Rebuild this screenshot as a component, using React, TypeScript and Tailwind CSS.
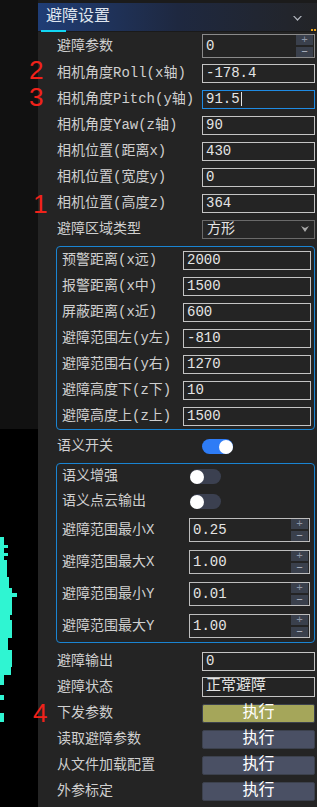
import React from 'react';

const cyanBands: [number, number, number][] = [
  // y, height, width
  [537, 8, 4],
  [545, 3, 8],
  [548, 5, 4],
  [553, 3, 8],
  [556, 4, 4],
  [560, 7, 7],
  [567, 10, 7],
  [577, 11, 9],
  [588, 5, 12],
  [593, 4, 17],
  [597, 18, 12],
  [615, 5, 10],
  [620, 18, 12],
  [638, 12, 8],
  [650, 17, 12],
  [667, 8, 11],
  [675, 10, 4],
  [695, 5, 4],
  [713, 9, 4],
];

function Field({ value, focused }: { value: string; focused?: boolean }) {
  return (
    <div
      className={`w-[113px] h-[19px] border flex items-center px-[3px] text-[14px] leading-[17px] text-[#e4e4e4] ${
        focused ? 'border-[#1f8be3]' : 'border-[#c4c4c4]'
      }`}
    >
      <span>{value}</span>
      {focused && <span className="w-px h-[14px] bg-[#e4e4e4] ml-px" />}
    </div>
  );
}

function Spin({ value, w, border }: { value: string; w: string; border: string }) {
  return (
    <div className={`${w} h-[24px] border ${border} flex items-center pl-[3px] pr-px text-[14px] text-[#e4e4e4]`}>
      <span className="flex-1">{value}</span>
      <div className="flex flex-col gap-[2px]">
        <div className="w-[17px] h-[10px] bg-[#3a404c] flex items-center justify-center text-[#8e96a6] text-[11px] leading-none">+</div>
        <div className="w-[17px] h-[10px] bg-[#3a404c] flex items-center justify-center text-[#b8bec8] text-[11px] leading-none">−</div>
      </div>
    </div>
  );
}

function Toggle({ on }: { on?: boolean }) {
  return (
    <div
      className={`w-[31px] h-[15px] rounded-full flex items-center ${
        on ? 'bg-[#2e7cf6] justify-end' : 'bg-[#3b4050] justify-start'
      }`}
    >
      <div className="w-[14px] h-[14px] rounded-full bg-white" />
    </div>
  );
}

function Row({ label, children, h = 'h-[26px]' }: { label: string; children: React.ReactNode; h?: string }) {
  return (
    <div className={`flex items-center ${h}`}>
      <div className="w-[164px] pl-[19px] whitespace-nowrap">{label}</div>
      {children}
    </div>
  );
}

function GroupRow({ label, children, h = 'h-[26px]', lw = 'w-[126px]' }: { label: string; children: React.ReactNode; h?: string; lw?: string }) {
  return (
    <div className={`flex items-center ${h}`}>
      <div className={`${lw} pl-[5px] whitespace-nowrap`}>{label}</div>
      {children}
    </div>
  );
}

function ExecButton({ active }: { active?: boolean }) {
  return (
    <div
      className={`w-[113px] h-[19px] rounded-[2px] border border-[#3c414d] flex items-center justify-center text-[16px] text-white ${
        active ? 'bg-[#a5a65a]' : 'bg-[#4a5064]'
      }`}
    >
      执行
    </div>
  );
}

export default function App() {
  const group1 = [
    ['预警距离(x远)', '2000'],
    ['报警距离(x中)', '1500'],
    ['屏蔽距离(x近)', '600'],
    ['避障范围左(y左)', '-810'],
    ['避障范围右(y右)', '1270'],
    ['避障高度下(z下)', '10'],
    ['避障高度上(z上)', '1500'],
  ];
  const spins = [
    ['避障范围最小X', '0.25'],
    ['避障范围最大X', '1.00'],
    ['避障范围最小Y', '0.01'],
    ['避障范围最大Y', '1.00'],
  ];

  return (
    <div className="relative w-[317px] h-[807px] flex overflow-hidden font-['Liberation_Mono','Noto_Sans_CJK_SC',monospace] text-[14px] text-[#cfcfcf]">
      {/* 3D view strip */}
      <div className="w-[38px] flex flex-col">
        <div className="h-[429px] bg-[#111111]" />
        <div className="flex-1 bg-black">
          <svg width="38" height="378" viewBox="0 429 38 378">
            {cyanBands.map(([y, h, w]) => (
              <rect key={y} x={0} y={y} width={w} height={h} fill="#2ff5d2" />
            ))}
          </svg>
        </div>
      </div>

      {/* settings panel */}
      <div className="flex-1 bg-[#242424] flex flex-col">
        <div className="h-[3px] bg-[#1b1b1b]" />
        <div className="relative h-[29px] bg-linear-to-r from-[#1f3d76] via-[#1e2840] to-[#232427] flex items-center pl-[8px] text-[16px] text-[#dfe5ef] border-b border-[#1a1a1a]">
          避障设置
          <svg className="absolute left-[255px] top-[13px]" width="9" height="6" viewBox="0 0 9 6">
            <path d="M0 0 L4.5 5 L9 0 L7.5 0 L4.5 3 L1.5 0 Z" fill="#b0b4bc" />
          </svg>
          <div className="absolute left-[3px] bottom-[-1px] w-[25px] h-[2px] bg-[#12d6f2]" />
          <div className="absolute left-[273px] bottom-0 flex gap-px">
            <div className="w-[2px] h-[2px] bg-[#e8a21a]" />
            <div className="w-[2px] h-[2px] bg-[#e8a21a]" />
          </div>
        </div>

        <Row label="避障参数" h="h-[28px]">
          <Spin value="0" w="w-[113px]" border="border-[#8a8a8a]" />
        </Row>
        <Row label="相机角度Roll(x轴)">
          <Field value="-178.4" />
        </Row>
        <Row label="相机角度Pitch(y轴)">
          <Field value="91.5" focused />
        </Row>
        <Row label="相机角度Yaw(z轴)">
          <Field value="90" />
        </Row>
        <Row label="相机位置(距离x)">
          <Field value="430" />
        </Row>
        <Row label="相机位置(宽度y)">
          <Field value="0" />
        </Row>
        <Row label="相机位置(高度z)">
          <Field value="364" />
        </Row>
        <Row label="避障区域类型">
          <div className="w-[113px] h-[19px] border border-[#6a6a6a] bg-[#262626] flex items-center justify-between pl-[4px] pr-[5px] text-[#e4e4e4]">
            <span>方形</span>
            <svg width="8" height="6" viewBox="0 0 8 6">
              <path d="M0 0 L4 6 L8 0 L4 2 Z" fill="#a8a8a8" />
            </svg>
          </div>
        </Row>

        <div className="ml-[18px] mr-[2px] mt-[4px] border border-[#1a84d2] rounded-[4px]">
          {group1.map(([l, v]) => (
            <GroupRow key={l} label={l}>
              <div className="w-[128px] h-[19px] border border-[#c4c4c4] flex items-center px-[3px] text-[#e4e4e4]">{v}</div>
            </GroupRow>
          ))}
        </div>

        <Row label="语义开关" h="h-[33px]">
          <Toggle on />
        </Row>

        <div className="ml-[18px] mr-[2px] border border-[#1a84d2] rounded-[4px]">
          <GroupRow label="语义增强" h="h-[25px]" lw="w-[133px]">
            <Toggle />
          </GroupRow>
          <GroupRow label="语义点云输出" h="h-[25px]" lw="w-[133px]">
            <Toggle />
          </GroupRow>
          {spins.map(([l, v]) => (
            <GroupRow key={l} label={l} h="h-[32px]" lw="w-[132px]">
              <Spin value={v} w="w-[121px]" border="border-[#bdbdbd]" />
            </GroupRow>
          ))}
        </div>

        <div className="mt-[5px]">
          <Row label="避障输出">
            <Field value="0" />
          </Row>
          <Row label="避障状态">
            <div className="w-[113px] h-[20px] border border-[#c4c4c4] flex items-center px-[3px] text-[15px] text-[#e4e4e4]">正常避障</div>
          </Row>
          <Row label="下发参数">
            <ExecButton active />
          </Row>
          <Row label="读取避障参数">
            <ExecButton />
          </Row>
          <Row label="从文件加载配置">
            <ExecButton />
          </Row>
          <Row label="外参标定">
            <ExecButton />
          </Row>
        </div>
      </div>

      {/* red annotation numbers */}
      <div className="absolute left-[29px] top-[60px] h-[20px] text-[26px] leading-[20px] text-[#f0221a] font-['Liberation_Sans',sans-serif]">2</div>
      <div className="absolute left-[29px] top-[87px] h-[20px] text-[26px] leading-[20px] text-[#f0221a] font-['Liberation_Sans',sans-serif]">3</div>
      <div className="absolute left-[33px] top-[194px] h-[20px] text-[26px] leading-[20px] text-[#f0221a] font-['Liberation_Sans',sans-serif]">1</div>
      <div className="absolute left-[33px] top-[703px] h-[20px] text-[26px] leading-[20px] text-[#f0221a] font-['Liberation_Sans',sans-serif]">4</div>
    </div>
  );
}
